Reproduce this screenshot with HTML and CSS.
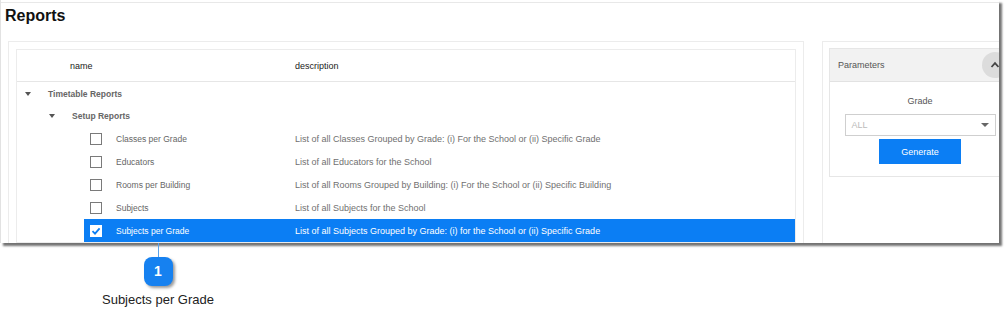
FILE: index.html
```html
<!DOCTYPE html>
<html lang="en">
<head>
    <meta charset="UTF-8">
    <title>Reports</title>
    <link rel="stylesheet" href="styles.css">
</head>
<body>

    <div class="shot">
        <div class="page">
            <h1 class="title">Reports</h1>

            <div class="main">
                <div class="panel">
                    <div class="tree">
                        <div class="tree-head">
                            <span class="col-name">name</span>
                            <span class="col-desc">description</span>
                        </div>

                        <div class="row group lvl1">
                            <span class="caret"></span>
                            <span class="group-label">Timetable Reports</span>
                        </div>
                        <div class="row group lvl2">
                            <span class="caret"></span>
                            <span class="group-label">Setup Reports</span>
                        </div>

                        <div class="row leaf">
                            <div class="cell">
                                <span class="check"></span>
                                <span class="name">Classes per Grade</span>
                                <span class="desc">List of all Classes Grouped by Grade: (i) For the School or (ii) Specific Grade</span>
                            </div>
                        </div>
                        <div class="row leaf">
                            <div class="cell">
                                <span class="check"></span>
                                <span class="name">Educators</span>
                                <span class="desc">List of all Educators for the School</span>
                            </div>
                        </div>
                        <div class="row leaf">
                            <div class="cell">
                                <span class="check"></span>
                                <span class="name">Rooms per Building</span>
                                <span class="desc">List of all Rooms Grouped by Building: (i) For the School or (ii) Specific Building</span>
                            </div>
                        </div>
                        <div class="row leaf">
                            <div class="cell">
                                <span class="check"></span>
                                <span class="name">Subjects</span>
                                <span class="desc">List of all Subjects for the School</span>
                            </div>
                        </div>
                        <div class="row leaf">
                            <div class="cell selected">
                                <span class="check checked">
                                    <svg width="10" height="10" viewBox="0 0 10 10"><path d="M1.5 5.2 L4 7.6 L8.6 2.4" fill="none" stroke="#0b7ef4" stroke-width="1.8"/></svg>
                                </span>
                                <span class="name">Subjects per Grade</span>
                                <span class="desc">List of all Subjects Grouped by Grade: (i) for the School or (ii) Specific Grade</span>
                            </div>
                        </div>
                    </div>
                </div>

                <div class="side">
                    <div class="params">
                        <div class="params-head">
                            <span>Parameters</span>
                            <span class="toggle">
                                <svg width="12" height="12" viewBox="0 0 12 12"><path d="M2.5 8 L6 4.2 L9.5 8" fill="none" stroke="#444" stroke-width="1.8"/></svg>
                            </span>
                        </div>
                        <div class="params-body">
                            <div class="field-label">Grade</div>
                            <div class="select">
                                <span>ALL</span>
                                <span class="select-caret"></span>
                            </div>
                            <button class="btn">Generate</button>
                        </div>
                    </div>
                </div>
            </div>
        </div>
    </div>

    <div class="callout">
        <div class="callout-line"></div>
        <div class="badge">1</div>
        <div class="caption">Subjects per Grade</div>
    </div>

</body>
</html>
```

FILE: styles.css
```css
body {
    margin: 0;
    padding: 0;
    background-color: #fff;
    font-family: "Liberation Sans", Arial, sans-serif;
}
.shot {
    width: 998px;
    height: 243px;
    overflow: hidden;
    border-left: 1px solid #e2e2e2;
    background-color: #fff;
    box-shadow: 3px 3px 2px rgba(0, 0, 0, 0.55);
}
.page {
    margin-top: 2px;
    border-top: 1px solid #e8e8e8;
}
.title {
    margin: 3px 0 0 4px;
    font-size: 16px;
    line-height: 19px;
    font-weight: bold;
    color: #111;
}
.main {
    display: flex;
    align-items: flex-start;
    margin: 16px 0 0 7px;
}
.panel {
    flex: none;
    width: 780px;
    padding: 7px;
    border: 1px solid #ececec;
}
.tree {
    border: 1px solid #ececec;
    font-size: 8.5px;
    color: #666;
}
.tree-head {
    display: flex;
    align-items: center;
    height: 31px;
    border-bottom: 1px solid #e6e6e6;
    color: #222;
    font-size: 9px;
}
.col-name {
    width: 225px;
    padding-left: 53px;
}
.row {
    display: flex;
    align-items: center;
    height: 23px;
}
.caret {
    width: 0;
    height: 0;
    border-left: 3px solid transparent;
    border-right: 3px solid transparent;
    border-top: 4px solid #555;
    margin-right: 17px;
}
.lvl1 {
    padding-left: 8px;
}
.lvl2 {
    padding-left: 32px;
    height: 22px;
}
.group-label {
    font-weight: bold;
    color: #666;
}
.leaf {
    padding-left: 67px;
}
.cell {
    flex: 1;
    display: flex;
    align-items: center;
    height: 23px;
}
.check {
    box-sizing: border-box;
    width: 12px;
    height: 12px;
    margin-left: 6px;
    margin-right: 14px;
    border: 1px solid #7a7a7a;
    background-color: #fff;
    display: flex;
    align-items: center;
    justify-content: center;
}
.check.checked {
    border-color: #fff;
}
.name {
    width: 179px;
}
.desc {
    font-size: 9px;
    color: #707070;
}
.selected {
    background-color: #0b7ef4;
    color: #fff;
}
.selected .desc {
    color: #fff;
}
.side {
    flex: none;
    width: 182px;
    margin-left: 18px;
    padding: 6px;
    border: 1px solid #ececec;
    height: 220px;
}
.params {
    border: 1px solid #e6e6e6;
}
.params-head {
    display: flex;
    align-items: center;
    justify-content: space-between;
    height: 32px;
    padding-left: 8px;
    background-color: #f2f2f2;
    border-bottom: 1px solid #e2e2e2;
    font-size: 9px;
    color: #555;
}
.toggle {
    width: 26px;
    height: 26px;
    margin-right: 2px;
    border-radius: 50%;
    background-color: #dcdcdc;
    display: flex;
    align-items: center;
    justify-content: center;
}
.params-body {
    display: flex;
    flex-direction: column;
    align-items: center;
    padding: 13px 0 12px;
}
.field-label {
    font-size: 9px;
    line-height: 12px;
    color: #555;
}
.select {
    box-sizing: border-box;
    width: 151px;
    height: 22px;
    margin-top: 7px;
    padding: 0 6px;
    border: 1px solid #cfcfcf;
    display: flex;
    align-items: center;
    justify-content: space-between;
    font-size: 9px;
    color: #bbb;
}
.select-caret {
    width: 0;
    height: 0;
    border-left: 4px solid transparent;
    border-right: 4px solid transparent;
    border-top: 4px solid #666;
}
.btn {
    width: 82px;
    height: 25px;
    margin-top: 3px;
    padding: 0;
    border: none;
    background-color: #0b7ef4;
    color: #fff;
    font-family: "Liberation Sans", Arial, sans-serif;
    font-size: 9px;
}
.callout {
    width: 200px;
    margin-left: 58px;
    display: flex;
    flex-direction: column;
    align-items: center;
}
.callout-line {
    width: 1px;
    height: 14px;
    background-color: #5aa2ea;
}
.badge {
    width: 29px;
    height: 29px;
    border-radius: 8px;
    background-color: #1681f0;
    color: #fff;
    font-weight: bold;
    font-size: 14px;
    line-height: 29px;
    text-align: center;
    box-shadow: 2px 2px 3px rgba(0, 0, 0, 0.4);
}
.caption {
    margin-top: 6px;
    font-size: 13px;
    line-height: 15px;
    color: #222;
}
```
